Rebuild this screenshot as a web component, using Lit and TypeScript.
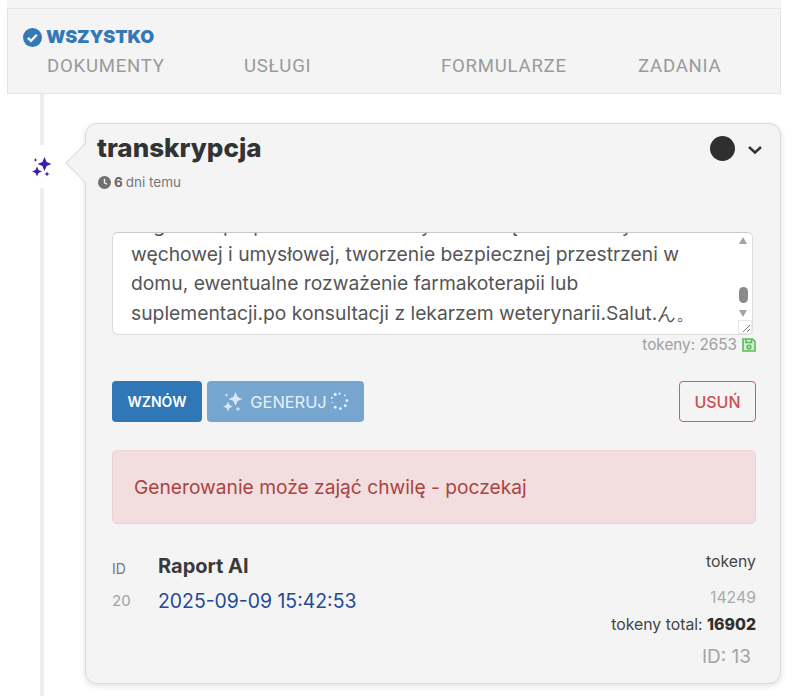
import { LitElement, html, css, svg } from "lit";
import { customElement } from "lit/decorators.js";

const star = (cx: number, cy: number, r: number) => {
  const k = r * 0.3;
  return svg`<path d="M${cx} ${cy - r}L${cx + k} ${cy - k}L${cx + r} ${cy}L${cx + k} ${cy + k}L${cx} ${cy + r}L${cx - k} ${cy + k}L${cx - r} ${cy}L${cx - k} ${cy - k}Z"/>`;
};
const sparkles = (cls: string) => html`<svg class=${cls} viewBox="0 0 20 20" fill="currentColor">
  ${star(12.5, 7, 7)}${star(5, 14.5, 5)}${star(3.5, 3, 2)}${star(15, 17, 2.6)}
</svg>`;

@customElement("app-root")
export class AppRoot extends LitElement {
  static styles = css`
    :host { display: block; width: 800px; height: 696px; overflow: hidden; background: #fff; font-family: Inter, "Noto Sans", sans-serif; color: #333; position: relative; }
    .top { margin: 0 19px 0 7px; height: 8px; background: #f5f5f5; border-bottom: 1px solid #e6e6e6; }
    .panel { margin: 0 19px 0 7px; height: 85px; box-sizing: border-box; background: #f4f4f5; border: 1px solid #e4e4e4; border-top: 0; padding: 17px 0 0 15px; }
    .all { display: flex; align-items: center; gap: 4px; color: #3379b5; font: 900 18px/22px Inter, sans-serif; letter-spacing: -0.1px; }
    .check { width: 19px; height: 19px; flex: none; }
    .tabs { display: grid; grid-template-columns: repeat(4, 197px); margin: 7px 0 0 24px; color: #9a9a9a; font: 400 18.6px/22px Roboto, sans-serif; letter-spacing: 0.75px; }
    .timeline { display: flex; position: relative; padding: 29px 19px 0 0; }
    .timeline::before { content: ""; position: absolute; left: 40px; top: 0; bottom: -20px; width: 4px; background: #eeeeee; }
    .rail { width: 85px; flex: none; position: relative; }
    .badge { position: absolute; left: 27px; top: 22px; width: 30px; height: 43px; background: #fff; display: flex; align-items: center; justify-content: center; color: #3b1fa8; }
    .spark { width: 20px; height: 20px; }
    .card { flex: 1; height: 561px; box-sizing: border-box; position: relative; background: #f4f4f5; border: 1px solid #d9d9d9; border-radius: 12px; box-shadow: 0 2px 6px rgba(0,0,0,.12); padding: 6px 24px 0 26px; }
    .arrow { position: absolute; left: -15px; top: 25px; width: 28px; height: 28px; background: #f4f4f5; border-left: 1px solid #dcdcdc; border-bottom: 1px solid #dcdcdc; transform: rotate(45deg); box-sizing: border-box; }
    .head { display: flex; align-items: flex-start; margin-left: -15px; position: relative; }
    h1 { margin: 0; font: 800 26px/36px Inter, sans-serif; color: #333; flex: 1; }
    .dot { width: 25px; height: 25px; border-radius: 50%; background: #2f2f2f; margin: 6px 12px 0 0; }
    .chev { width: 16px; height: 10px; margin: 15px -7px 0 0; }
    .ago { display: flex; align-items: center; gap: 3px; margin: 8px 0 0 -14px; font: 400 13.5px/16px Inter, sans-serif; color: #777; position: relative; }
    .ago b { color: #666; }
    .clock { width: 13px; height: 13px; }
    .ta { margin: 42px 3px 0 0; position: relative; height: 103px; box-sizing: border-box; background: #fff; border: 1px solid #dcdcdc; border-top-color: #c8c8c8; border-radius: 6px; overflow: hidden; }
    .ta-text { position: absolute; left: 18px; bottom: 6px; width: 600px; font: 400 19.3px/29.3px Inter, sans-serif; color: #555; margin: 0; }
    .sb { position: absolute; right: 0; top: 0; bottom: 0; width: 17px; background: #fff; }
    .up, .down { position: absolute; left: 4px; width: 0; height: 0; border-left: 4.5px solid transparent; border-right: 4.5px solid transparent; }
    .up { top: 4px; border-bottom: 7px solid #a3a3a3; }
    .down { top: 77px; border-top: 7px solid #a3a3a3; }
    .thumb { position: absolute; left: 4px; top: 54px; width: 9px; height: 16px; border-radius: 5px; background: #8a8a8a; }
    .grip { position: absolute; right: 0; bottom: 0; width: 14px; height: 14px; background: #fff; border: 1px solid #e8e8e8; box-sizing: border-box; }
    .grip svg { display: block; width: 12px; height: 12px; }
    .tok { display: flex; justify-content: flex-end; align-items: center; gap: 5px; font: 400 15.3px/20px Inter, sans-serif; color: #a0a0a0; margin-top: 0; }
    .save { width: 14px; height: 14px; color: #5cb85c; }
    .btns { display: flex; gap: 5px; margin-top: 26px; }
    .btn { height: 41px; box-sizing: border-box; border-radius: 4px; display: flex; align-items: center; justify-content: center; font: 500 16px/20px Inter, sans-serif; }
    .resume { width: 90px; background: #2f77b6; color: #fff; font-weight: 600; font-size: 14px; }
    .gen { width: 157px; background: #76a5d0; color: #e9f1f8; gap: 7px; font-size: 16.4px; font-weight: 400; }
    .gen .spark { width: 20px; height: 20px; color: #dbe8f3; margin-left: 1px; }
    .spin { width: 19px; height: 19px; margin-left: -4px; }
    .del { margin-left: auto; width: 77px; border: 1px solid #c9605c; color: #c9504c; background: transparent; }
    .alert { margin-top: 28px; height: 74px; box-sizing: border-box; background: #f2dede; border: 1px solid #ebd3d6; border-radius: 5px; display: flex; align-items: center; padding-left: 21px; color: #a94442; font: 400 19.2px/24px Inter, sans-serif; }
    .foot { display: flex; justify-content: space-between; margin-top: 27px; }
    .tbl { display: grid; grid-template-columns: 46px auto; grid-template-rows: 35px 35px; align-items: center; align-self: flex-start; margin-top: -3px; }
    .idh { font: 400 14px/20px Inter, sans-serif; color: #777; padding-top: 6px; }
    .rap { font: 700 20px/24px Inter, sans-serif; color: #3a3a3a; }
    .num { font: 400 15px/20px Inter, sans-serif; color: #a3a3a3; }
    .date { font: 400 19.4px/24px Inter, sans-serif; color: #234a98; }
    .right { text-align: right; font: 400 15.8px/20px Inter, sans-serif; color: #444; }
    .r1 { margin-top: 1px; }
    .r2 { color: #aaa; margin-top: 16px; }
    .r3 { margin-top: 7px; }
    .r3 b { color: #2f2f2f; font-weight: 800; }
    .r4 { font-size: 19px; line-height: 24px; color: #a3a3a3; margin: 10px 5px 0 0; }
  `;

  render() {
    const dots = [[10,1.8,1.2],[15.5,3.5,.9],[17.8,9,1.5],[16,14.5,1.5],[11,17.5,1.5],[5.5,16,1.5],[2.2,11,.7],[2,6,1.1],[5.5,2.5,1.6]];
    return html`
      <div class="top"></div>
      <div class="panel">
        <div class="all">
          <svg class="check" viewBox="0 0 20 20"><circle cx="10" cy="10" r="10" fill="#3379b5"/><path d="M5.2 10.3l3.2 3.2 6.2-6.4" fill="none" stroke="#f4f4f5" stroke-width="2.6"/></svg>
          WSZYSTKO
        </div>
        <div class="tabs"><span>DOKUMENTY</span><span>USŁUGI</span><span>FORMULARZE</span><span>ZADANIA</span></div>
      </div>
      <div class="timeline">
        <div class="rail"><div class="badge">${sparkles("spark")}</div></div>
        <div class="card">
          <div class="arrow"></div>
          <div class="head">
            <h1>transkrypcja</h1>
            <div class="dot"></div>
            <svg class="chev" viewBox="0 0 16 10"><path d="M2 2l6 5.5L14 2" fill="none" stroke="#333" stroke-width="2.4"/></svg>
          </div>
          <div class="ago">
            <svg class="clock" viewBox="0 0 14 14"><circle cx="7" cy="7" r="7" fill="#6f6f6f"/><path d="M7 3v4.3l2.8 1.6" fill="none" stroke="#f4f4f5" stroke-width="1.5"/></svg>
            <b>6</b> dni temu
          </div>
          <div class="ta">
            <p class="ta-text">nagrań.Zaproponował behawiorystoe zwiększenie aktywności<br>węchowej i umysłowej, tworzenie bezpiecznej przestrzeni w<br>domu, ewentualne rozważenie farmakoterapii lub<br>suplementacji.po konsultacji z lekarzem weterynarii.Salut.ん。</p>
            <div class="sb"><div class="up"></div><div class="thumb"></div><div class="down"></div></div>
            <div class="grip"><svg viewBox="0 0 12 12"><path d="M11 4L4 11M11 8L8 11" stroke="#777" stroke-width="1"/></svg></div>
          </div>
          <div class="tok">tokeny: 2653
            <svg class="save" viewBox="0 0 14 14" fill="none" stroke="currentColor" stroke-width="1.6"><path d="M1 1h9.5L13 3.5V13H1z" fill="#d6efd6"/><path d="M4 1v3.5h5.5V1"/><circle cx="7" cy="9" r="1.8"/></svg>
          </div>
          <div class="btns">
            <div class="btn resume">WZNÓW</div>
            <div class="btn gen">${sparkles("spark")}GENERUJ
              <svg class="spin" viewBox="0 0 20 20" fill="#e9f1f8">${dots.map(d => svg`<circle cx=${d[0]} cy=${d[1]} r=${d[2]}/>`)}</svg>
            </div>
            <div class="btn del">USUŃ</div>
          </div>
          <div class="alert">Generowanie może zająć chwilę - poczekaj</div>
          <div class="foot">
            <div class="tbl">
              <div class="idh">ID</div><div class="rap">Raport AI</div>
              <div class="num">20</div><div class="date">2025-09-09 15:42:53</div>
            </div>
            <div class="right">
              <div class="r1">tokeny</div>
              <div class="r2">14249</div>
              <div class="r3">tokeny total: <b>16902</b></div>
              <div class="r4">ID: 13</div>
            </div>
          </div>
        </div>
      </div>
    `;
  }
}
